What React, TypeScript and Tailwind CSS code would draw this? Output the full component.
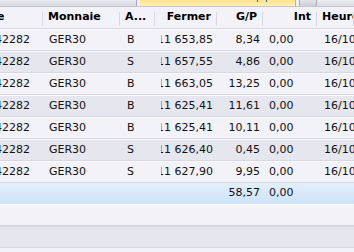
import React from "react";

interface Trade {
  id: string;
  symbol: string;
  side: string;
  close: string;
  pl: string;
  interest: string;
  time: string;
}

const trades: Trade[] = [
  { id: "42282", symbol: "GER30", side: "B", close: "11 653,85", pl: "8,34", interest: "0,00", time: "16/10" },
  { id: "42282", symbol: "GER30", side: "S", close: "11 657,55", pl: "4,86", interest: "0,00", time: "16/10" },
  { id: "42282", symbol: "GER30", side: "B", close: "11 663,05", pl: "13,25", interest: "0,00", time: "16/10" },
  { id: "42282", symbol: "GER30", side: "B", close: "11 625,41", pl: "11,61", interest: "0,00", time: "16/10" },
  { id: "42282", symbol: "GER30", side: "B", close: "11 625,41", pl: "10,11", interest: "0,00", time: "16/10" },
  { id: "42282", symbol: "GER30", side: "S", close: "11 626,40", pl: "0,45", interest: "0,00", time: "16/10" },
  { id: "42282", symbol: "GER30", side: "S", close: "11 627,90", pl: "9,95", interest: "0,00", time: "16/10" },
];

const cols = "43px 77px 35px 62px 46px 54px 1fr";

function HeaderCell({ children, className = "" }: { children?: React.ReactNode; className?: string }) {
  return (
    <div className={`relative flex items-center overflow-hidden whitespace-nowrap font-bold ${className}`}>
      {children}
      <span className="absolute right-0 top-[5px] h-[14px] w-px bg-[#d7d7df]" />
    </div>
  );
}

export default function App() {
  return (
    <div
      className="w-[354px] h-[252px] overflow-hidden bg-[#f3f2f8] text-[11px] text-[#111]"
      style={{ fontFamily: '"DejaVu Sans", Verdana, sans-serif' }}
    >
      {/* tab strip */}
      <div className="flex h-[7px] border-b border-[#c6c6d2]">
        <div className="w-[137px] bg-gradient-to-b from-[#ececf3] to-[#d6d6e0] border-r border-[#a9a9b9]" />
        <div className="w-[3px] bg-[#eeeef4]" />
        <div className="relative w-[156px] bg-gradient-to-b from-[#fde38a] to-[#fff0b8] border-r border-[#c9b56e]">
          <span className="absolute left-[117px] top-0 h-[2px] w-px bg-[#8a4a10]" />
          <span className="absolute left-[126px] top-0 h-[2px] w-px bg-[#2a5a9a]" />
        </div>
        <div className="w-[3px] bg-[#eeeef4]" />
        <div className="w-[18px] bg-gradient-to-b from-[#e2e2ea] to-[#cdcdd8] border-x border-[#a9a9b9]" />
        <div className="flex-1 bg-gradient-to-b from-[#ececf3] to-[#dcdce4]" />
      </div>

      {/* header */}
      <div className="grid h-[22px] border-b border-[#d6d6de] text-black" style={{ gridTemplateColumns: cols }}>
        <HeaderCell>
          <span className="-ml-[3px]">e</span>
        </HeaderCell>
        <HeaderCell className="pl-[5px]">Monnaie</HeaderCell>
        <HeaderCell className="pl-[5px]">A...</HeaderCell>
        <HeaderCell className="justify-end pr-[6px]">Fermer</HeaderCell>
        <HeaderCell className="justify-end pr-[6px]">G/P</HeaderCell>
        <HeaderCell className="justify-end pr-[6px]">Int</HeaderCell>
        <HeaderCell className="pl-[5px]">Heure</HeaderCell>
      </div>

      {/* rows */}
      {trades.map((t, i) => (
        <div
          key={i}
          className={`grid h-[22px] border-t border-t-[#fafafd] border-b border-b-[#d8d8e0] ${
            i % 2 === 0 ? "bg-[#f3f2f8]" : "bg-[#e6e6ee]"
          }`}
          style={{ gridTemplateColumns: cols }}
        >
          <div className="flex items-center overflow-hidden whitespace-nowrap">
            <span className="-ml-[5px]">{t.id}</span>
          </div>
          <div className="flex items-center pl-[6px] whitespace-nowrap">{t.symbol}</div>
          <div className="flex items-center pl-[7px]">{t.side}</div>
          <div className="flex items-center justify-end overflow-hidden whitespace-nowrap pl-[6px] pr-[4px]">
            <div className="flex min-w-0 justify-end overflow-hidden">
              <span className="shrink-0">{t.close}</span>
            </div>
          </div>
          <div className="flex items-center justify-end pr-[3px]">{t.pl}</div>
          <div className="flex items-center pl-[6px]">{t.interest}</div>
          <div className="flex items-center pl-[7px] overflow-hidden whitespace-nowrap">{t.time}</div>
        </div>
      ))}

      {/* total */}
      <div
        className="grid h-[22px] border-b border-white bg-gradient-to-b from-[#e3effc] to-[#cde2f8]"
        style={{ gridTemplateColumns: cols }}
      >
        <div />
        <div />
        <div />
        <div />
        <div className="flex items-center justify-end pr-[3px]">58,57</div>
        <div className="flex items-center pl-[6px]">0,00</div>
        <div />
      </div>

      {/* empty rows */}
      <div className="h-[22px] border-b-2 border-[#d8d8e0] bg-[#f3f2f8]" />
      <div className="h-[21px] border-b border-[#d8d8e0] bg-[#e5e5ed]" />
      <div className="h-[10px] bg-[#f3f2f8]" />
    </div>
  );
}
